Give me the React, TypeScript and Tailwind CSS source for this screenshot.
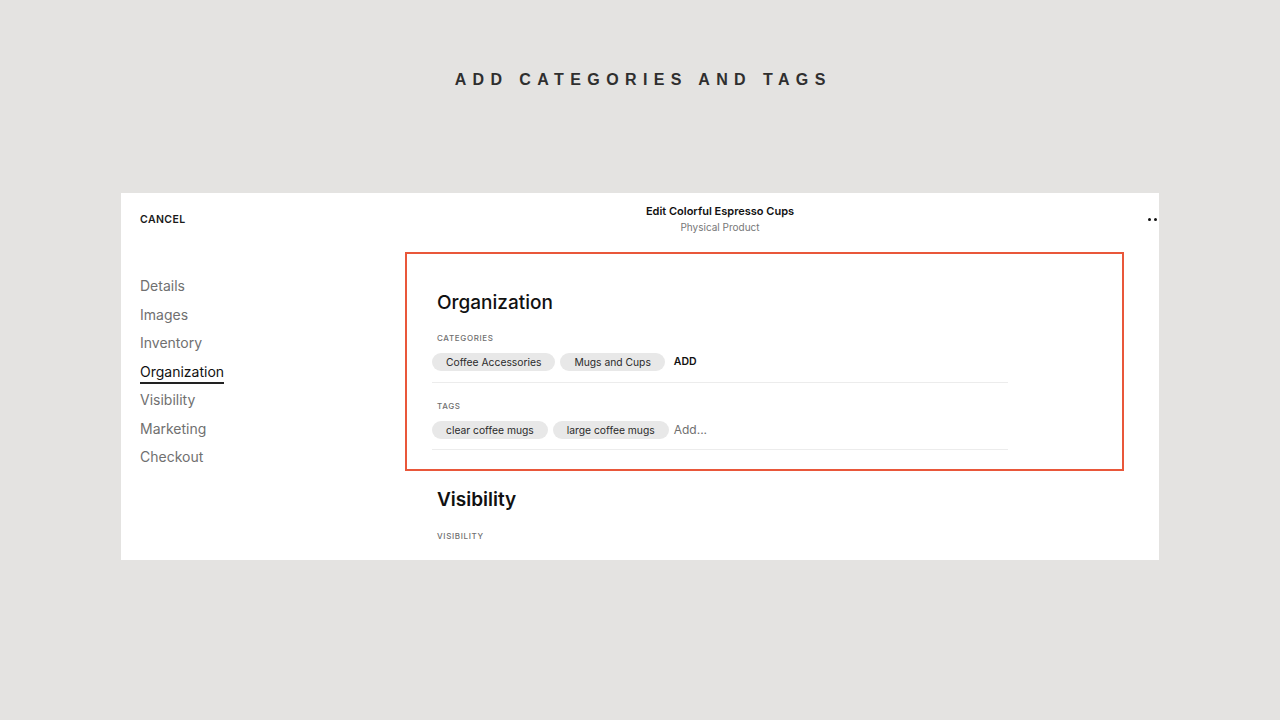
const navItems = ['Details', 'Images', 'Inventory', 'Organization', 'Visibility', 'Marketing', 'Checkout']

function Chip({ label }: { label: string }) {
  return (
    <span className="h-[18px] px-[14px] rounded-full bg-[#e8e8e8] text-[10.3px] leading-[18px] text-[#2b2b2b] whitespace-nowrap">
      {label}
    </span>
  )
}

function FieldLabel({ children }: { children: string }) {
  return (
    <div className="ml-[5px] text-[8px] leading-[12px] tracking-[0.08em] text-[#6f6f6f] font-medium uppercase">
      {children}
    </div>
  )
}

export default function App() {
  return (
    <div
      className="w-[1280px] h-[720px] bg-[#e4e3e1] flex flex-col items-center overflow-hidden"
      style={{ fontFamily: 'Inter, "Noto Sans", sans-serif' }}
    >
      <h1
        className="mt-[70px] h-[20px] text-[16px] leading-[20px] font-bold tracking-[0.4em] text-[#2f2f2f] pl-[0.4em]"
        style={{ fontFamily: '"Liberation Sans", Arial, sans-serif' }}
      >
        ADD CATEGORIES AND TAGS
      </h1>

      <div className="mt-[103px] w-[1038px] h-[367px] bg-white overflow-hidden flex flex-col">
        {/* header */}
        <div className="h-[59px] flex items-start">
          <div className="w-[449px] pl-[19px] pt-[20px] text-[10.5px] leading-[14px] font-semibold tracking-[0.04em] text-[#1a1a1a]">
            CANCEL
          </div>
          <div className="w-[300px] pt-[10px] text-center">
            <div className="text-[11px] leading-[16px] font-semibold text-[#111]">Edit Colorful Espresso Cups</div>
            <div className="text-[10px] leading-[16px] text-[#777]">Physical Product</div>
          </div>
          <div className="flex-1 flex justify-end pt-[25px] mr-[-4px] gap-[3px]">
            <span className="w-[3px] h-[3px] rounded-full bg-[#111]" />
            <span className="w-[3px] h-[3px] rounded-full bg-[#111]" />
            <span className="w-[3px] h-[3px] rounded-full bg-[#111]" />
          </div>
        </div>

        {/* body */}
        <div className="flex">
          <nav className="w-[284px] pl-[19px] pt-[20px] flex flex-col">
            {navItems.map((item) => (
              <div key={item} className="h-[28.5px] flex items-center">
                <span
                  className={
                    item === 'Organization'
                      ? 'text-[14px] leading-[18px] text-[#111] border-b-2 border-[#222] mt-[4px] pb-[1px]'
                      : 'text-[14px] leading-[18px] text-[#707070]'
                  }
                >
                  {item}
                </span>
              </div>
            ))}
          </nav>

          <div className="w-[719px]">
            <section className="h-[219px] border-2 border-[#e9573a] pl-[25px] pt-[37px]">
              <h2 className="ml-[5px] text-[19px] leading-[24px] font-medium text-[#111]">Organization</h2>

              <div className="mt-[17px]">
                <FieldLabel>Categories</FieldLabel>
              </div>
              <div className="w-[576px] mt-[9px] pb-[11px] border-b border-[#ececec] flex items-center gap-[5px]">
                <Chip label="Coffee Accessories" />
                <Chip label="Mugs and Cups" />
                <span className="ml-[4px] text-[10.5px] font-semibold text-[#111]">ADD</span>
              </div>

              <div className="mt-[17px]">
                <FieldLabel>Tags</FieldLabel>
              </div>
              <div className="w-[576px] mt-[9px] pb-[10px] border-b border-[#ececec] flex items-center gap-[5px]">
                <Chip label="clear coffee mugs" />
                <Chip label="large coffee mugs" />
                <span className="text-[12px] text-[#6f6f6f]">Add...</span>
              </div>
            </section>

            <div className="pl-[32px]">
              <h2 className="mt-[17px] text-[19px] leading-[24px] font-semibold text-[#111]">Visibility</h2>
              <div className="mt-[18px] text-[8px] leading-[12px] tracking-[0.08em] text-[#6f6f6f] font-medium">
                VISIBILITY
              </div>
            </div>
          </div>
        </div>
      </div>
    </div>
  )
}
